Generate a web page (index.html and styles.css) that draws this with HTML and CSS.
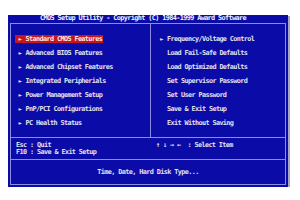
FILE: index.html
```html
<!DOCTYPE html>
<html>
<head>
<meta charset="utf-8">
<link rel="stylesheet" href="styles.css">
</head>
<body>
<div class="screen">
  <div class="title">CMOS Setup Utility - Copyright (C) 1984-1999 Award Software</div>
  <div class="frame">
    <div class="menu">
      <div class="col left">
        <div class="item"><span class="sel"><span class="arr">►</span>Standard CMOS Features</span></div>
        <div class="item"><span class="arr">►</span>Advanced BIOS Features</div>
        <div class="item"><span class="arr">►</span>Advanced Chipset Features</div>
        <div class="item"><span class="arr">►</span>Integrated Peripherials</div>
        <div class="item"><span class="arr">►</span>Power Management Setup</div>
        <div class="item"><span class="arr">►</span>PnP/PCI Configurations</div>
        <div class="item"><span class="arr">►</span>PC Health Status</div>
      </div>
      <div class="col right">
        <div class="item"><span class="arr">►</span>Frequency/Voltage Control</div>
        <div class="item"><span class="arr"></span>Load Fail-Safe Defaults</div>
        <div class="item"><span class="arr"></span>Load Optimized Defaults</div>
        <div class="item"><span class="arr"></span>Set Supervisor Password</div>
        <div class="item"><span class="arr"></span>Set User Password</div>
        <div class="item"><span class="arr"></span>Save &amp; Exit Setup</div>
        <div class="item"><span class="arr"></span>Exit Without Saving</div>
      </div>
    </div>
    <div class="keys">
      <div class="kcol">
        <div class="krow">Esc : Quit</div>
        <div class="krow">F10 : Save &amp; Exit Setup</div>
      </div>
      <div class="kcol">
        <div class="krow">↑ ↓ → ←  : Select Item</div>
      </div>
    </div>
    <div class="help">Time, Date, Hard Disk Type...</div>
  </div>
</div>
</body>
</html>
```

FILE: styles.css
```css
html, body {
  margin: 0;
  padding: 0;
  background: #ffffff;
}

body {
  font-family: "DejaVu Sans Mono", "Liberation Mono", monospace;
  font-weight: bold;
  font-size: 6.8px;
  letter-spacing: -0.6px;
  color: #e2e2ee;
}

.screen {
  margin: 15px 0 0 8px;
  width: 280px;
  height: 172px;
  background: #0b0ca8;
  box-shadow: 2px 1px 0 #a9a9c4;
  display: flex;
  flex-direction: column;
}

.title {
  height: 8px;
  line-height: 7px;
  padding-left: 32px;
  color: #f4f4fa;
  white-space: pre;
}

.frame {
  flex: 1;
  margin: 0 2px 2px 2px;
  border: 1px solid #8c8ce6;
  display: flex;
  flex-direction: column;
}

.menu {
  height: 113px;
  border-bottom: 1px solid #8c8ce6;
  display: grid;
  grid-template-columns: 139px 1fr;
}

.col {
  padding-top: 11px;
}

.left {
  padding-left: 7.5px;
}

.right {
  border-left: 1px solid #8c8ce6;
  padding-left: 9px;
}

.item {
  height: 14px;
  line-height: 8px;
  white-space: pre;
}

.arr {
  display: inline-block;
  width: 7px;
  font-size: 6px;
  letter-spacing: 0;
  vertical-align: top;
}

.sel {
  display: inline-block;
  background: #c8141c;
  color: #f6eaea;
  margin-left: -3.5px;
  padding: 0 1px 0 3.5px;
  line-height: 8px;
}

.keys {
  border-bottom: 1px solid #8c8ce6;
  padding-top: 3.5px;
  box-sizing: border-box;
  height: 22px;
  display: grid;
  grid-template-columns: 145px 1fr;
}

.kcol:first-child {
  padding-left: 5px;
}

.krow {
  line-height: 7px;
  white-space: pre;
}

.help {
  flex: 1;
  display: flex;
  align-items: center;
  justify-content: center;
  white-space: pre;
}
```
